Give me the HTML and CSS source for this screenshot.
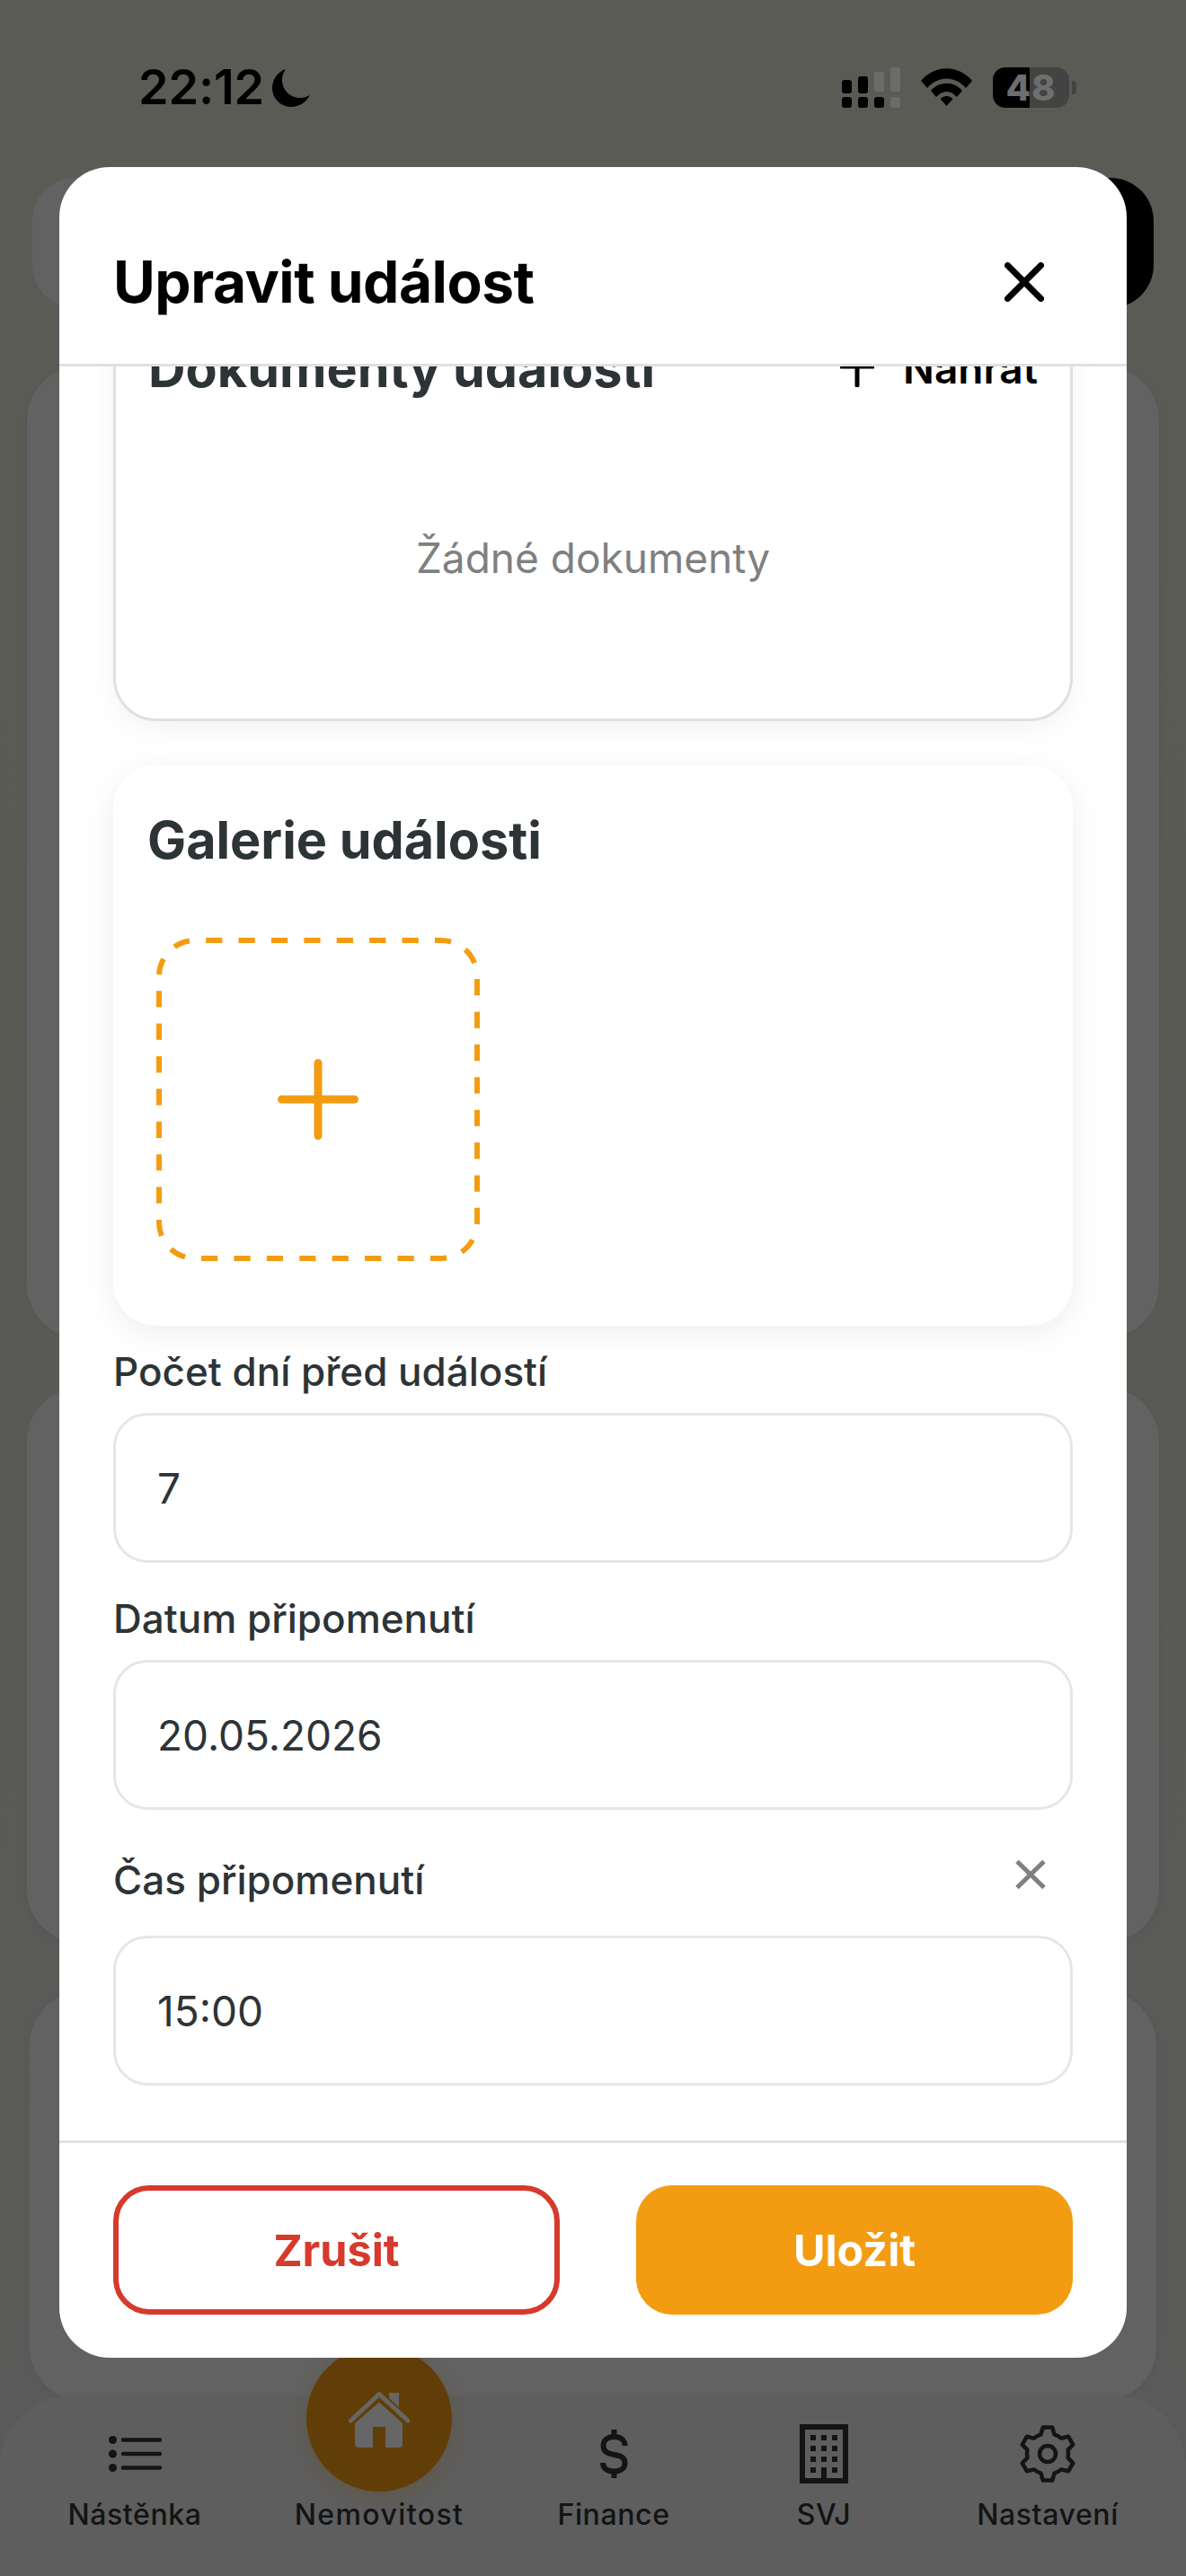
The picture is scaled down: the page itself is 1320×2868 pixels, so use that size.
FILE: index.html
```html
<!DOCTYPE html>
<html lang="cs">
<head>
<meta charset="utf-8">
<title>Upravit událost</title>
<link rel="stylesheet" href="styles.css">
</head>
<body>
<div class="screen">
  <div class="page">
    <div class="search-card"><div class="search-btn"></div></div>
    <div class="bg-card bg-card-a"></div>
    <div class="bg-card bg-card-b"></div>
    <div class="bg-card bg-card-c"></div>
    <nav class="nav">
      <div class="nav-item">
        <div class="nav-icon">
          <svg class="ic-list" viewBox="0 0 59 40"><circle cx="4.5" cy="4.5" r="4.5"/><circle cx="4.5" cy="20" r="4.5"/><circle cx="4.5" cy="35.5" r="4.5"/><path d="M16 4.5H57M16 20H57M16 35.5H57"/></svg>
        </div>
        <span class="nav-label">Nástěnka</span>
      </div>
      <div class="nav-item nav-item-active">
        <div class="home-bubble">
          <svg class="ic-home" viewBox="0 0 68 63"><path class="roof" d="M2.500 33L34 3.500L66 33"/><path class="chimney" d="M45 2H56V18L45 8Z"/><path class="body" d="M34 12.500L60 36V59a4 4 0 0 1-4 4H41V40H27V63H11a4 4 0 0 1-4-4V36Z"/></svg>
        </div>
        <div class="nav-icon"></div>
        <span class="nav-label">Nemovitost</span>
      </div>
      <div class="nav-item">
        <div class="nav-icon">
          <svg class="ic-dollar" viewBox="0 0 31 54"><path class="s" d="M27.500 18C27.500 11.500 22.500 8 15.500 8C8.500 8 3.500 11.500 3.500 18C3.500 33 27.500 23 27.500 37C27.500 43.500 22.500 46.500 15.500 46.500C8.500 46.500 3 43.500 3 37"/><path class="bars" d="M12.500 0H18.500V8H12.500ZM12.500 46H18.500V54H12.500Z"/></svg>
        </div>
        <span class="nav-label">Finance</span>
      </div>
      <div class="nav-item">
        <div class="nav-icon">
          <svg class="ic-building" viewBox="0 0 54 66"><rect class="shell" x="3" y="3" width="48" height="60"/><path class="win" d="M12 12h6v6h-6zM24 12h6v6h-6zM36 12h6v6h-6zM12 24h6v6h-6zM24 24h6v6h-6zM36 24h6v6h-6zM12 36h6v6h-6zM24 36h6v6h-6zM36 36h6v6h-6zM12 48h6v6h-6zM24 48h6v15h-6zM36 48h6v6h-6z"/></svg>
        </div>
        <span class="nav-label">SVJ</span>
      </div>
      <div class="nav-item">
        <div class="nav-icon">
          <svg class="ic-gear" viewBox="0 0 64 64"><path d="M26.800 2.500L37.200 2.500L39.500 10.300A23 23 0 0 1 47.100 14.600L55 12.700L60.200 21.700L54.600 27.600A23 23 0 0 1 54.600 36.400L60.200 42.300L55 51.300L47.100 49.400A23 23 0 0 1 39.500 53.700L37.200 61.500L26.800 61.500L24.500 53.700A23 23 0 0 1 16.900 49.400L9 51.300L3.800 42.300L9.400 36.400A23 23 0 0 1 9.400 27.600L3.800 21.700L9 12.700L16.900 14.600A23 23 0 0 1 24.500 10.300Z"/><circle cx="32" cy="32" r="9"/></svg>
        </div>
        <span class="nav-label">Nastavení</span>
      </div>
    </nav>
  </div>

  <div class="overlay"></div>

  <header class="status">
    <div class="status-left">
      <span class="time">22:12</span>
      <svg class="ic-moon" viewBox="0 0 42 42"><path d="M15 0C6 3 0 11.500 0 21C0 32.500 9.500 42 21 42C30 42 37.500 37 42 29C38 31 35 32 31 32C20 32 11 23 11 12C11 7.500 12.500 3.500 15 0Z"/></svg>
    </div>
    <div class="status-right">
      <div class="signal">
        <span class="bar b1"></span><span class="bar b2"></span><span class="bar b3"></span><span class="bar b4"></span>
      </div>
      <svg class="ic-wifi" viewBox="0 0 57 42"><path d="M0 14C15 -4.500 42 -4.500 57 14L50 22C38 8 19 8 7 22Z"/><path d="M11 25C20 14 37 14 46 25L40 32C33 24 24 24 17 32Z"/><path d="M21.500 34C26 30 31 30 35.500 34L28.500 42Z"/></svg>
      <div class="battery"><span class="battery-text">48</span></div>
      <span class="battery-cap"></span>
    </div>
  </header>

  <section class="modal">
    <div class="modal-head">
      <h1 class="modal-title">Upravit událost</h1>
      <svg class="ic-close" viewBox="0 0 44 44"><path d="M3.500 3.500L40.500 40.500M40.500 3.500L3.500 40.500"/></svg>
    </div>
    <div class="modal-body">
      <div class="card doc-card">
        <div class="card-head">
          <h2 class="card-title">Dokumenty události</h2>
          <div class="upload">
            <svg class="ic-plus-small" viewBox="0 0 38 42"><path d="M1.500 19H36.500M19 1.500V40"/></svg>
            <span class="upload-text">Nahrát</span>
          </div>
        </div>
        <p class="empty">Žádné dokumenty</p>
      </div>

      <div class="card gallery-card">
        <h2 class="card-title">Galerie události</h2>
        <div class="add-tile">
          <svg class="tile-frame" viewBox="0 0 360 360"><rect x="3" y="3" width="354" height="354" rx="40" ry="40" pathLength="1332"/></svg>
          <svg class="ic-plus" viewBox="0 0 90 90"><path d="M4.500 45H85.500M45 4.500V85.500"/></svg>
        </div>
      </div>

      <div class="field field-first">
        <label class="label">Počet dní před událostí</label>
        <div class="input">7</div>
      </div>
      <div class="field">
        <label class="label">Datum připomenutí</label>
        <div class="input">20.05.2026</div>
      </div>
      <div class="field">
        <div class="label-row">
          <label class="label">Čas připomenutí</label>
          <svg class="ic-clear" viewBox="0 0 34 32"><path d="M2 1.500L32 30.500M32 1.500L2 30.500"/></svg>
        </div>
        <div class="input">15:00</div>
      </div>
    </div>
    <div class="modal-foot">
      <button class="btn btn-cancel">Zrušit</button>
      <button class="btn btn-save">Uložit</button>
    </div>
  </section>
</div>
</body>
</html>
```

FILE: styles.css
```css
* { box-sizing: border-box; }
html, body { margin: 0; padding: 0; }
body { font-family: Inter, "Liberation Sans", sans-serif; color: #2d3436; }

.screen { position: relative; width: 1320px; height: 2868px; overflow: hidden; }

/* background page */
.page {
  height: 2868px;
  padding-top: 198px;
  display: flex;
  flex-direction: column;
  background: linear-gradient(180deg, #e3e4d4 0%, #dfe2d5 50%, #e1e1e1 100%);
}
.search-card {
  flex: none;
  height: 145px;
  margin: 0 36px;
  border-radius: 48px;
  background: #f5f5f5;
  display: flex;
  justify-content: flex-end;
}
.search-btn { width: 145px; height: 145px; border-radius: 48px; background: #000; }
.bg-card { flex: none; background: #f5f5f5; border-radius: 60px; box-shadow: 0 2px 10px rgba(0,0,0,.05); }
.bg-card-a { height: 1082px; margin: 65px 30px 0; }
.bg-card-b { height: 618px; margin: 55px 30px 0; }
.bg-card-c { height: 456px; margin: 54px 33px 0; }

.nav {
  flex: none;
  margin-top: -6px;
  height: 201px;
  position: relative;
  display: grid;
  grid-template-columns: 300px 244px 278px 190px 308px;
  padding-top: 32px;
  border-radius: 80px 80px 0 0;
  background: #ebebeb;
}
.nav-item { position: relative; display: flex; flex-direction: column; align-items: center; }
.nav-icon { height: 66px; display: flex; align-items: center; justify-content: center; }
.nav-label { margin-top: 15px; font-size: 32px; line-height: 40px; font-weight: 500; letter-spacing: .6px; white-space: nowrap; color: #2d3436; }
.nav-item-active .nav-label { font-weight: 500; letter-spacing: 1.4px; }
.home-bubble {
  position: absolute;
  top: -87px;
  left: 41px;
  width: 162px;
  height: 162px;
  border-radius: 50%;
  background: #f39c12;
  box-shadow: 0 6px 24px rgba(243,156,18,.25);
  display: flex;
  align-items: center;
  justify-content: center;
}
.ic-home { width: 68px; height: 63px; margin-top: 1px; }
.ic-home .roof { fill: none; stroke: #fff; stroke-width: 5; stroke-linecap: round; stroke-linejoin: round; }
.ic-home .chimney, .ic-home .body { fill: #fff; }
.ic-list { width: 59px; height: 40px; }
.ic-list circle { fill: #2d3436; }
.ic-list path { fill: none; stroke: #2d3436; stroke-width: 4.500; stroke-linecap: round; }
.ic-dollar { width: 31px; height: 54px; }
.ic-dollar .s { fill: none; stroke: #2d3436; stroke-width: 6; }
.ic-dollar .bars { fill: #2d3436; }
.ic-building { width: 54px; height: 66px; }
.ic-building .shell { fill: none; stroke: #2d3436; stroke-width: 6; }
.ic-building .win { fill: #2d3436; }
.ic-gear { width: 64px; height: 64px; }
.ic-gear path, .ic-gear circle { fill: none; stroke: #2d3436; stroke-width: 4.500; stroke-linejoin: round; }

.overlay { position: absolute; inset: 0; background: rgba(0,0,0,.6); }

/* status bar */
.status {
  position: absolute;
  top: 74px;
  left: 154px;
  right: 122px;
  height: 46px;
  display: flex;
  justify-content: space-between;
  align-items: center;
  color: #000;
}
.status-left { display: flex; align-items: center; gap: 9px; }
.time { font-size: 54px; line-height: 46px; font-weight: 600; letter-spacing: -.2px; }
.ic-moon { width: 42px; height: 42px; margin-top: 1px; }
.ic-moon path { fill: #000; }
.status-right { display: flex; align-items: center; }
.signal { display: flex; align-items: flex-end; gap: 7px; width: 65px; height: 45px; margin-right: 23px; }
.bar { position: relative; width: 11px; border-radius: 3px; display: block; }
.bar::after { content: ""; position: absolute; left: 0; right: 0; bottom: 0; height: 12px; border-radius: 3px; }
.bar::before { content: ""; position: absolute; left: 0; right: 0; top: 0; bottom: 18px; border-radius: 3px; }
.b1 { height: 31px; }
.b2 { height: 35px; }
.b3 { height: 40px; }
.b4 { height: 45px; }
.b1::after, .b1::before, .b2::after, .b2::before, .b3::after { background: #000; }
.b3::before, .b4::before, .b4::after { background: #6b6b6b; }
.b1::before { bottom: 16px; }
.b2::before { bottom: 16px; }
.ic-wifi { width: 57px; height: 42px; margin-right: 23px; }
.ic-wifi path { fill: #000; }
.battery {
  width: 85px;
  height: 45px;
  border-radius: 14px;
  background: linear-gradient(90deg, #000 0, #000 41px, #434343 41px, #434343 100%);
  display: flex;
  align-items: center;
  justify-content: center;
}
.battery-text { font-size: 40px; line-height: 45px; font-weight: 800; color: #6e6e6e; letter-spacing: 1px; }
.battery-cap { width: 5px; height: 15px; margin-left: 3px; border-radius: 0 4px 4px 0; background: #434343; }

/* modal */
.modal {
  position: absolute;
  left: 66px;
  top: 186px;
  width: 1188px;
  height: 2439px;
  border-radius: 56px;
  background: #fff;
  display: flex;
  flex-direction: column;
  overflow: hidden;
}
.modal-head {
  height: 222px;
  flex: none;
  padding: 37px 92px 0 60px;
  border-bottom: 3px solid #e0e0e0;
  display: flex;
  align-items: center;
  justify-content: space-between;
}
.modal-title { margin: 0; font-size: 64px; line-height: 80px; font-weight: 700; color: #000; letter-spacing: -.5px; }
.ic-close { width: 44px; height: 44px; }
.ic-close path { fill: none; stroke: #000; stroke-width: 7; stroke-linecap: round; }

.modal-body { flex: 1; min-height: 0; overflow: hidden; padding: 0 60px; }
.card { border-radius: 48px; background: #fff; }
.doc-card {
  height: 465px;
  margin-top: -70px;
  padding: 32px 36px 0;
  border: 3px solid #e0e0e0;
  box-shadow: 0 8px 30px rgba(0,0,0,.05);
  display: flex;
  flex-direction: column;
}
.card-head { display: flex; justify-content: space-between; align-items: center; height: 74px; }
.card-title { margin: 0; font-size: 57.500px; line-height: 74px; font-weight: 700; color: #2d3436; }
.upload { display: flex; align-items: center; gap: 32px; }
.upload-text { font-size: 46px; line-height: 56px; font-weight: 600; color: #000; }
.ic-plus-small { width: 38px; height: 42px; }
.ic-plus-small path { fill: none; stroke: #000; stroke-width: 5; stroke-linecap: round; }
.empty { margin: 144px 0 0; text-align: center; font-size: 46px; line-height: 60px; color: #7f8080; }
.gallery-card {
  height: 624px;
  margin-top: 49px;
  padding: 46px 38px 0;
  box-shadow: 0 8px 36px rgba(0,0,0,.07);
}
.add-tile {
  position: relative;
  width: 360px;
  height: 360px;
  margin: 72px 0 0 10px;
  display: flex;
  align-items: center;
  justify-content: center;
}
.tile-frame { position: absolute; inset: 0; width: 360px; height: 360px; }
.tile-frame rect { fill: none; stroke: #f39c12; stroke-width: 6; stroke-dasharray: 18 18; stroke-dashoffset: -12; }
.ic-plus { width: 90px; height: 90px; }
.ic-plus path { fill: none; stroke: #f39c12; stroke-width: 9; stroke-linecap: round; }

.field { margin-top: 36px; }
.field-first { margin-top: 25px; }
.label { display: block; font-size: 44px; line-height: 52px; font-weight: 500; color: #2d3436; }
.label-row { display: flex; justify-content: space-between; align-items: flex-start; padding-right: 30px; height: 84px; }
.label-row .label { margin-top: 16px; }
.ic-clear { width: 34px; height: 32px; margin-top: 20px; }
.ic-clear path { fill: none; stroke: #808080; stroke-width: 5; }
.input {
  height: 167px;
  margin-top: 20px;
  padding: 0 46px;
  border: 3px solid #e6e6e6;
  border-radius: 38px;
  display: flex;
  align-items: center;
  font-size: 46px;
  color: #2d3436;
}

.modal-foot {
  height: 242px;
  flex: none;
  padding: 47px 60px 0;
  border-top: 3px solid #e0e0e0;
  display: grid;
  grid-template-columns: 497px 486px;
  justify-content: space-between;
  align-items: start;
}
.btn {
  height: 144px;
  border-radius: 40px;
  font-family: inherit;
  font-size: 48.500px;
  font-weight: 700;
  padding: 0;
}
.btn-cancel { background: #fff; border: 6px solid #d63a2d; color: #d63a2d; }
.btn-save { background: #f39c12; border: 0; color: #fff; }
```
